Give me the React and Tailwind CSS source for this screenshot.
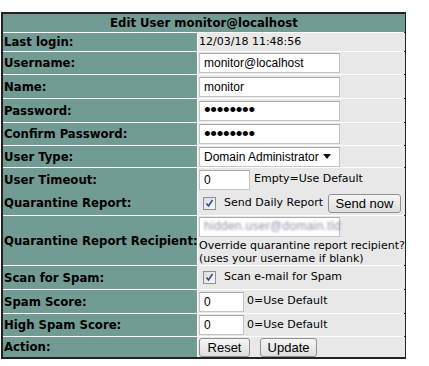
import React from 'react';

const cond = "font-[family-name:'DejaVu_Sans_Condensed','DejaVu_Sans',sans-serif]";
const arial = "font-[family-name:'Liberation_Sans',Arial,sans-serif]";
const label = `flex items-center pl-px bg-[#729b94] font-bold text-[13px] text-black whitespace-nowrap ${cond}`;
const cell = "flex items-center pl-px bg-[#e8e8e8] text-[11px] text-black whitespace-nowrap";
const field = `h-[20px] bg-white border border-[#c4c4c4] border-t-[#a9a9a9] px-1 flex items-center text-[12px] ${arial}`;
const dots = "text-[19px] tracking-[-0.3px]";
const button = `h-[19px] px-2 flex items-center justify-center rounded-[3px] border border-[#8f8f8f] bg-gradient-to-b from-[#f6f6f6] to-[#dddddd] text-[13px] leading-none ${arial}`;

const Check = () => (
    <span className="w-[13px] h-[13px] border border-[#8e8f8f] bg-gradient-to-br from-[#dcdcdc] to-[#f8f8f8] flex items-center justify-center">
        <svg width="11" height="11" viewBox="0 0 11 11">
            <path d="M2.5 5.5 L4.5 8 L8.5 2" stroke="#2c4b9c" strokeWidth="1.6" fill="none" />
        </svg>
    </span>
);

const App = () => {
    return (
        <div className="min-h-screen bg-white pt-3 pl-px font-[family-name:'DejaVu_Sans',Verdana,sans-serif]">
            <div className="w-[405px] border-2 border-[#222] bg-white grid grid-cols-[194px_1fr] grid-rows-[18px_18px_22px_23px_23px_22px_21px_47px_49px_23px_23px_22px_20px] gap-px">
                <div className={`col-span-2 flex items-center justify-center bg-[#729b94] font-bold text-[13px] ${cond}`}>
                    Edit User monitor@localhost
                </div>

                <div className={label}>Last login:</div>
                <div className={cell + " pl-[3px]"}>12/03/18 11:48:56</div>

                <div className={label}>Username:</div>
                <div className={cell}>
                    <div className={field + " w-[141px]"}>monitor@localhost</div>
                </div>

                <div className={label}>Name:</div>
                <div className={cell}>
                    <div className={field + " w-[141px]"}>monitor</div>
                </div>

                <div className={label}>Password:</div>
                <div className={cell}>
                    <div className={`${field} w-[141px] ${dots}`}>••••••••</div>
                </div>

                <div className={label}>Confirm Password:</div>
                <div className={cell}>
                    <div className={`${field} w-[141px] ${dots}`}>••••••••</div>
                </div>

                <div className={label}>User Type:</div>
                <div className={cell}>
                    <div className={field + " w-[141px] justify-between pr-2"}>
                        <span>Domain Administrator</span>
                        <svg width="8" height="5" viewBox="0 0 8 5"><path d="M0 0 H8 L4 5 Z" fill="#111" /></svg>
                    </div>
                </div>

                {/* timeout + quarantine report share one row, no separator */}
                <div className={`flex flex-col bg-[#729b94] font-bold text-[13px] pl-px ${cond}`}>
                    <div className="h-[23px] flex items-center">User Timeout:</div>
                    <div className="h-[24px] flex items-center">Quarantine Report:</div>
                </div>
                <div className="flex flex-col bg-[#e8e8e8] text-[11px] pl-px whitespace-nowrap">
                    <div className="h-[23px] flex items-center gap-1">
                        <div className={field + " w-[51px]"}>0</div>
                        <span>Empty=Use Default</span>
                    </div>
                    <div className="h-[24px] flex items-center">
                        <span className="ml-1"><Check /></span>
                        <span className="ml-2">Send Daily Report</span>
                        <div className={button + " ml-[5px] w-[73px]"}>Send now</div>
                    </div>
                </div>

                <div className={label}>Quarantine Report Recipient:</div>
                <div className="flex flex-col justify-center bg-[#e8e8e8] text-[11px] pl-px whitespace-nowrap leading-[13px]">
                    <div className={field + " w-[141px] mb-[2px]"}>
                        <span className="text-[#8f95ab] blur-[1.2px] tracking-wide">hidden.user@domain.tld</span>
                    </div>
                    <div>Override quarantine report recipient?</div>
                    <div>(uses your username if blank)</div>
                </div>

                <div className={label}>Scan for Spam:</div>
                <div className={cell}>
                    <span className="ml-1"><Check /></span>
                    <span className="ml-2">Scan e-mail for Spam</span>
                </div>

                <div className={label}>Spam Score:</div>
                <div className={cell + " gap-[3px]"}>
                    <div className={field + " w-[45px]"}>0</div>
                    <span>0=Use Default</span>
                </div>

                <div className={label}>High Spam Score:</div>
                <div className={cell + " gap-[3px]"}>
                    <div className={field + " w-[45px]"}>0</div>
                    <span>0=Use Default</span>
                </div>

                <div className={label}>Action:</div>
                <div className={cell + " gap-[10px]"}>
                    <div className={button + " w-[51px] h-[18px]"}>Reset</div>
                    <div className={button + " w-[57px] h-[18px]"}>Update</div>
                </div>
            </div>
        </div>
    );
};

export default App;
